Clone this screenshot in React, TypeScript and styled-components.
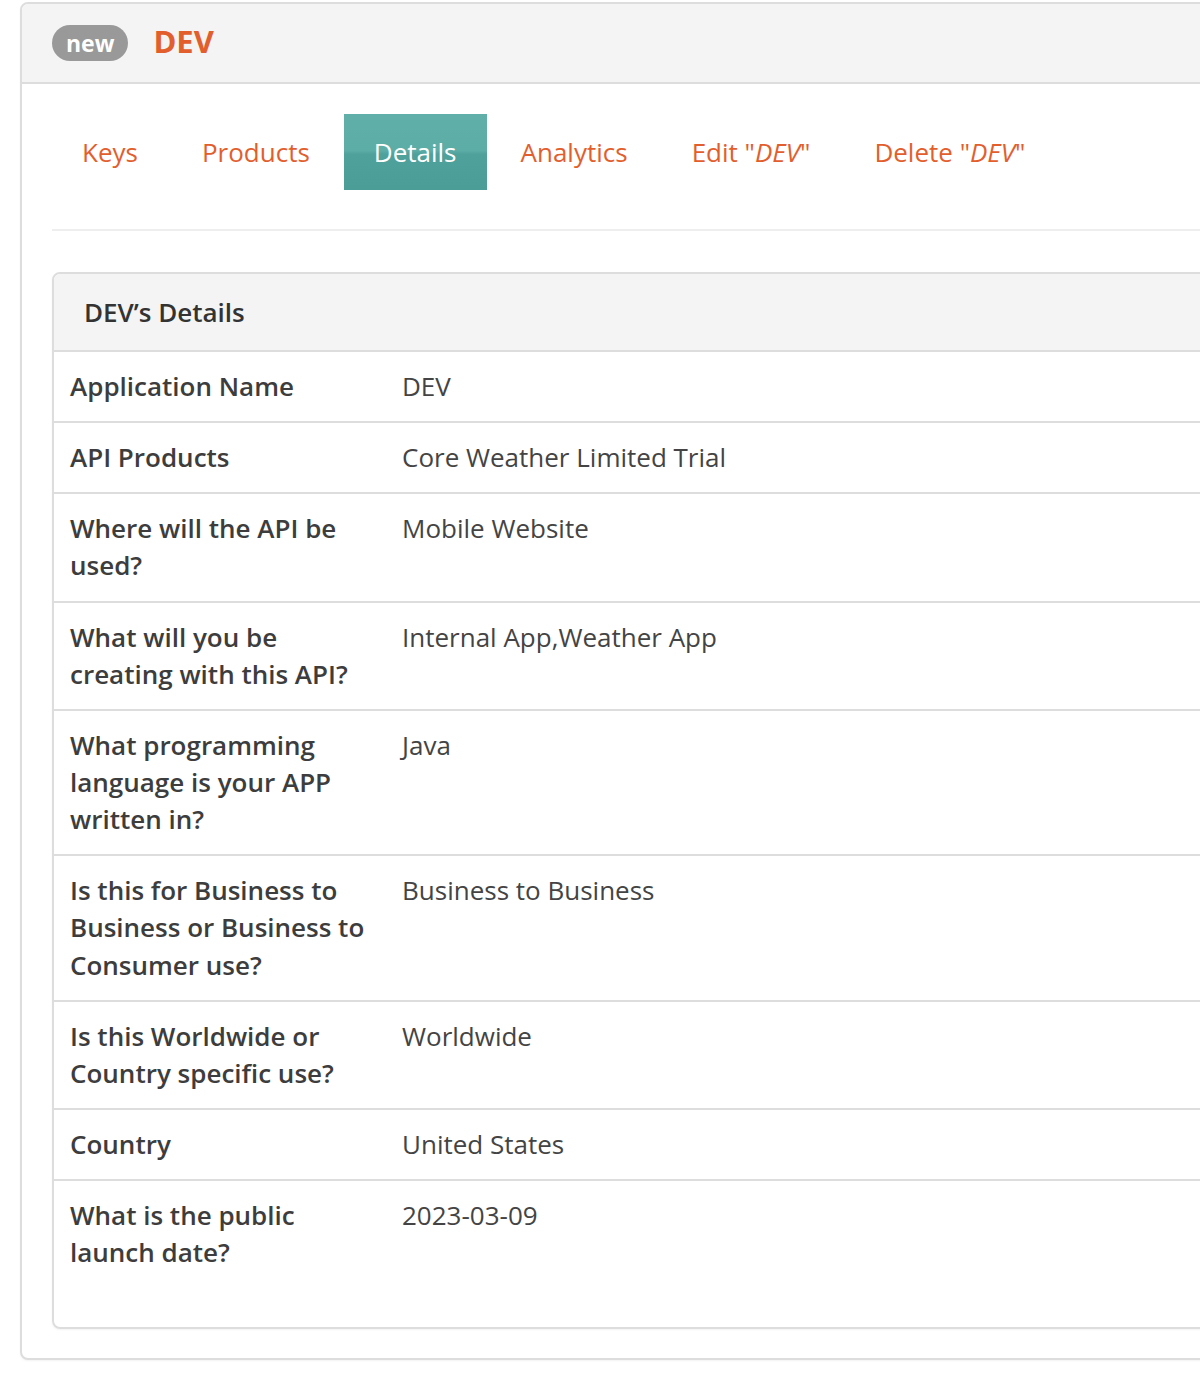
import React from "react";
import styled, { createGlobalStyle } from "styled-components";

const Global = createGlobalStyle`
  html, body {
    margin: 0;
    padding: 0;
    background: #fff;
    overflow-x: hidden;
  }
  body {
    font-family: "Open Sans", "Liberation Sans", Arial, sans-serif;
    font-size: 26px;
    line-height: 1.428571;
    color: #444;
  }
  * { box-sizing: border-box; }
`;

const Page = styled.div`
  padding: 2px 0 24px 20px;
  width: 1500px;
`;

const OuterPanel = styled.section`
  border: 2px solid #ddd;
  border-radius: 8px;
  background: #fff;
  box-shadow: 0 1px 2px rgba(0, 0, 0, 0.05);
  overflow: hidden;
`;

const Header = styled.header`
  height: 80px;
  display: flex;
  align-items: center;
  gap: 25px;
  padding: 0 30px;
  background: #f4f4f4;
  border-bottom: 2px solid #ddd;
`;

const Badge = styled.span`
  display: inline-flex;
  align-items: center;
  justify-content: center;
  height: 36px;
  padding: 0 14px;
  border-radius: 18px;
  background: #999;
  color: #fff;
  font-weight: 700;
  font-size: 23px;
  line-height: 36px;
`;

const Title = styled.h1`
  margin: 0;
  font-size: 31px;
  line-height: 40px;
  font-weight: 700;
  color: #e35e2d;
  position: relative;
  top: -2px;
`;

const Body = styled.div`
  padding: 30px 30px 29px;
`;

const Tabs = styled.nav`
  display: flex;
  gap: 4px;
  padding-bottom: 39px;
  border-bottom: 2px solid #eee;
  margin-bottom: 41px;
`;

const Tab = styled.a<{ $active?: boolean }>`
  display: block;
  padding: 20px 30px 19px;
  line-height: 37px;
  font-size: 26px;
  text-decoration: none;
  color: ${(p) => (p.$active ? "#fff" : "#e35e2d")};
  background: ${(p) =>
    p.$active
      ? "linear-gradient(to bottom, #60afa9 0%, #5dada7 48%, #4fa19b 53%, #4b9d97 100%)"
      : "transparent"};
  em {
    font-style: italic;
  }
`;

const InnerPanel = styled.div`
  border: 2px solid #ddd;
  border-radius: 8px;
  overflow: hidden;
  padding-bottom: 40px;
  box-shadow: 0 1px 2px rgba(0, 0, 0, 0.05);
`;

const PanelHeading = styled.h3`
  margin: 0;
  padding: 20px 30px 19px;
  background: #f4f4f4;
  border-bottom: 2px solid #ddd;
  font-size: 26px;
  line-height: 37px;
  font-weight: 600;
  color: #333;
`;

const Table = styled.table`
  width: 100%;
  border-collapse: collapse;
`;

const Row = styled.tr`
  & + & > * {
    border-top: 2px solid #ddd;
  }
`;

const Label = styled.th`
  width: 332px;
  padding: 16px;
  text-align: left;
  vertical-align: top;
  font-weight: 600;
  color: #3d3d3d;
  font-size: 26px;
  line-height: 1.428571;
`;

const Value = styled.td`
  padding: 16px;
  vertical-align: top;
  color: #444;
  font-size: 26px;
  line-height: 1.428571;
`;

const details: [string, string][] = [
  ["Application Name", "DEV"],
  ["API Products", "Core Weather Limited Trial"],
  ["Where will the API be used?", "Mobile Website"],
  ["What will you be creating with this API?", "Internal App,Weather App"],
  ["What programming language is your APP written in?", "Java"],
  ["Is this for Business to Business or Business to Consumer use?", "Business to Business"],
  ["Is this Worldwide or Country specific use?", "Worldwide"],
  ["Country", "United States"],
  ["What is the public launch date?", "2023-03-09"],
];

export default function App() {
  return (
    <>
      <Global />
      <Page>
        <OuterPanel>
          <Header>
            <Badge>new</Badge>
            <Title>DEV</Title>
          </Header>
          <Body>
            <Tabs>
              <Tab href="#">Keys</Tab>
              <Tab href="#">Products</Tab>
              <Tab href="#" $active>
                Details
              </Tab>
              <Tab href="#">Analytics</Tab>
              <Tab href="#">
                Edit "<em>DEV</em>"
              </Tab>
              <Tab href="#">
                Delete "<em>DEV</em>"
              </Tab>
            </Tabs>
            <InnerPanel>
              <PanelHeading>DEV’s Details</PanelHeading>
              <Table>
                <tbody>
                  {details.map(([k, v]) => (
                    <Row key={k}>
                      <Label>{k}</Label>
                      <Value>{v}</Value>
                    </Row>
                  ))}
                </tbody>
              </Table>
            </InnerPanel>
          </Body>
        </OuterPanel>
      </Page>
    </>
  );
}
